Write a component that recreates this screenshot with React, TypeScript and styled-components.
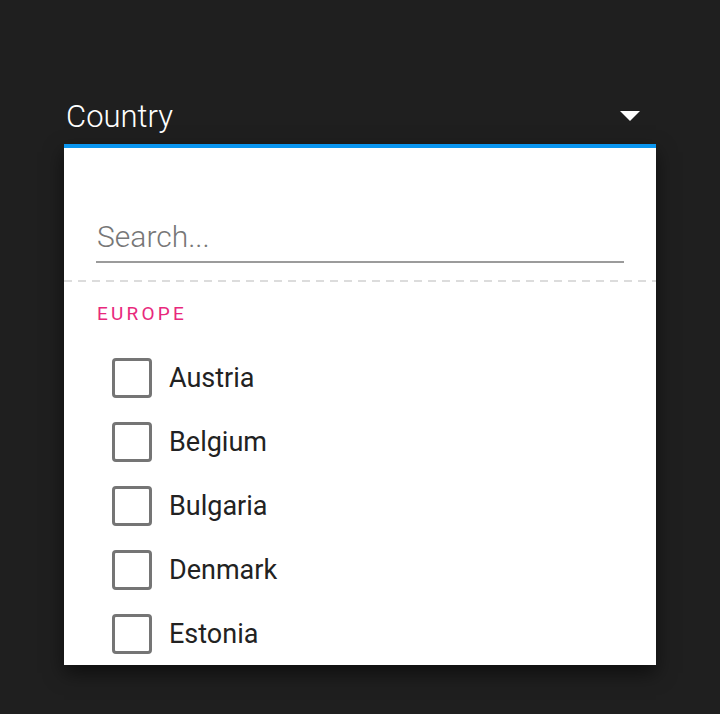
import React from "react";
import styled, { createGlobalStyle } from "styled-components";

const Global = createGlobalStyle`
  html, body { margin: 0; padding: 0; background: #1f1f1f; }
  body { font-family: Roboto, "Noto Sans", sans-serif; }
  * { box-sizing: border-box; }
`;

const Page = styled.div`
  padding: 92px 0 0 64px;
  width: 720px;
  height: 714px;
`;

const Select = styled.div`
  width: 592px;
  display: flex;
  flex-direction: column;
`;

const Header = styled.div`
  display: flex;
  align-items: center;
  justify-content: space-between;
  height: 52px;
  padding: 0 16px 4px 2px;
`;

const Label = styled.span`
  color: #ffffff;
  font-size: 31px;
  font-weight: 300;
  letter-spacing: 0;
`;

const Caret = styled.span`
  width: 0;
  height: 0;
  border-left: 10px solid transparent;
  border-right: 10px solid transparent;
  border-top: 10px solid #ffffff;
`;

const Panel = styled.div`
  background: #ffffff;
  border-top: 4px solid #0a96f0;
  height: 521px;
  overflow: hidden;
  box-shadow: 0 8px 18px rgba(0, 0, 0, 0.55);
  display: flex;
  flex-direction: column;
`;

const SearchWrap = styled.div`
  padding: 65px 32px 0;
  flex-shrink: 0;
`;

const SearchInput = styled.input`
  display: block;
  width: 100%;
  height: 50px;
  border: none;
  border-bottom: 2px solid #9b9b9b;
  outline: none;
  padding: 0 0 2px 1px;
  font-family: Roboto, "Noto Sans", sans-serif;
  font-size: 30px;
  font-weight: 300;
  color: #333;
  background: transparent;
  &::placeholder { color: #777; }
`;

const Divider = styled.div`
  margin-top: 17px;
  height: 2px;
  flex-shrink: 0;
  background-image: repeating-linear-gradient(
    to right,
    #dcdcdc 0px,
    #dcdcdc 8px,
    #ffffff 8px,
    #ffffff 14px
  );
`;

const Group = styled.div`
  margin: 20px 0 0 33px;
  color: #e8287c;
  font-size: 19px;
  letter-spacing: 3.2px;
  line-height: 24px;
  font-weight: 400;
  flex-shrink: 0;
`;

const List = styled.ul`
  list-style: none;
  margin: 20px 0 0;
  padding: 0;
  flex-shrink: 0;
`;

const Row = styled.li`
  display: flex;
  align-items: center;
  height: 64px;
  padding-left: 48px;
  gap: 17px;
`;

const Box = styled.span`
  width: 40px;
  height: 40px;
  border: 3px solid #757575;
  border-radius: 4px;
  flex-shrink: 0;
`;

const ItemText = styled.span`
  color: #222;
  font-size: 27px;
  font-weight: 400;
`;

const countries = ["Austria", "Belgium", "Bulgaria", "Denmark", "Estonia"];

export default function App() {
  return (
    <>
      <Global />
      <Page>
        <Select>
          <Header>
            <Label>Country</Label>
            <Caret />
          </Header>
          <Panel>
            <SearchWrap>
              <SearchInput placeholder="Search..." />
            </SearchWrap>
            <Divider />
            <Group>EUROPE</Group>
            <List>
              {countries.map((c) => (
                <Row key={c}>
                  <Box />
                  <ItemText>{c}</ItemText>
                </Row>
              ))}
            </List>
          </Panel>
        </Select>
      </Page>
    </>
  );
}
